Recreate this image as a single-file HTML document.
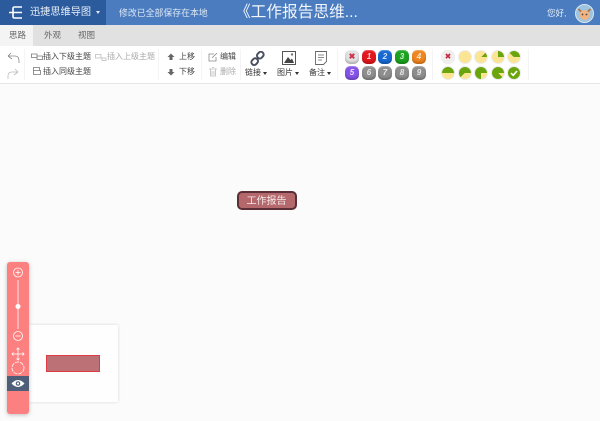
<!DOCTYPE html>
<html lang="zh"><head><meta charset="utf-8"><style>
html,body{margin:0;padding:0;width:600px;height:421px;overflow:hidden;background:#fbfbfb;font-family:"Liberation Sans","Noto Sans CJK SC",sans-serif}
#w{position:absolute;left:0;top:0;width:600px;height:421px;filter:blur(.3px)}
.a{position:absolute;white-space:nowrap}
.t{font-size:8px;line-height:10px;color:#444}
.g{color:#aaa}
.car{position:absolute;width:0;height:0;border-left:2.5px solid transparent;border-right:2.5px solid transparent;border-top:3px solid #333}
.b{position:absolute;width:14px;height:14px;border-radius:5px;color:rgba(255,255,255,.8);font:bold italic 8px/14px "Liberation Sans",sans-serif;text-align:center;box-shadow:inset 0 -2px 2px rgba(0,0,0,.22),inset 0 1px 1px rgba(255,255,255,.3)}
.p{position:absolute;width:12px;height:12px;border-radius:50%;border:1px solid #ececec}
.sep{position:absolute;top:49px;height:31px;width:1px;background:#f4f4f4}
</style></head><body><div id="w">
<div class="a" style="left:0;top:0;width:600px;height:25px;background:#4a7cbf"></div>
<div class="a" style="left:0;top:0;width:106px;height:25px;background:#2b5a9d"></div>
<svg class="a" style="left:8px;top:5px" width="16" height="15" viewBox="0 0 16 15"><path d="M14 2H6.500Q5 2 5 3.500V11.500Q5 13 6.500 13H14M1 7.500H14" fill="none" stroke="#fff" stroke-width="1.600"/></svg>
<div class="a" style="left:30px;top:6px;font-size:10.200px;line-height:13px;color:#e9f0fa">迅捷思维导图</div>
<div class="car" style="left:96px;top:11px;border-top-color:#dfe8f5"></div>
<div class="a" style="left:119px;top:8px;font-size:8.900px;line-height:10px;color:#dfe8f5">修改已全部保存在本地</div>
<div class="a" style="left:235px;top:1px;font-size:15.700px;line-height:23px;color:#f2f6fc">《工作报告思维...</div>
<div class="a" style="left:547px;top:8px;font-size:8.500px;line-height:10px;color:#e4ecf7">您好,</div>
<svg class="a" style="left:575px;top:4px" width="19" height="19" viewBox="0 0 19 19"><circle cx="9.500" cy="9.500" r="9" fill="#9cc3e0" stroke="#d8e6f3"/><path d="M3.500 5L7 8.500M15.500 5L12 8.500" stroke="#b5703a" stroke-width="1.800"/><ellipse cx="9.500" cy="11" rx="5" ry="5" fill="#eeb483"/><circle cx="7.500" cy="10.500" r=".9" fill="#543"/><circle cx="11.500" cy="10.500" r=".9" fill="#543"/></svg>

<div class="a" style="left:0;top:25px;width:600px;height:21px;background:#e1e1e1"></div>
<div class="a" style="left:0;top:25px;width:33px;height:21px;background:#f4f4f4"></div>
<div class="a t" style="left:9px;top:30px;font-size:8.500px;color:#666">思路</div>
<div class="a t" style="left:44px;top:30px;font-size:8.500px;color:#666">外观</div>
<div class="a t" style="left:78px;top:30px;font-size:8.500px;color:#666">视图</div>

<div class="a" style="left:0;top:46px;width:600px;height:37px;background:#fff;border-bottom:1px solid #e6e6e6"></div>
<svg class="a" style="left:5px;top:50px" width="16" height="30" viewBox="0 0 16 30" fill="none" stroke="#888" stroke-width=".8"><path d="M3 6H10Q14 6 14 11V13M3 6L6 3M3 6L7 9"/><path d="M13 22H7Q3 22 3 26V29M13 22L10 19M13 22L9 25" stroke="#bbb"/></svg>
<div class="sep" style="left:24px"></div>
<svg class="a" style="left:31px;top:52px" width="12" height="24" viewBox="0 0 12 24" fill="none" stroke="#777" stroke-width=".8"><path d="M.5 2H6V5.500H.5ZM6 4H11.500V7.500H6ZM2.500 15.500H8.500V18.500H2.500ZM2.500 18.500H9.500V22.500H2.500Z"/></svg>
<div class="a t" style="left:43px;top:52px">插入下级主题</div>
<svg class="a" style="left:95px;top:52px" width="12" height="10" viewBox="0 0 12 10" fill="none" stroke="#bbb" stroke-width=".8"><path d="M.5 2.500H6V6H.5ZM7 6H11V8.500H7Z"/></svg>
<div class="a t g" style="left:107px;top:52px">插入上级主题</div>
<div class="a t" style="left:43px;top:67px">插入同级主题</div>
<div class="sep" style="left:158px"></div>
<svg class="a" style="left:167px;top:53px" width="8" height="24" viewBox="0 0 8 24" fill="#666"><path d="M4 .5L7.500 4H5.500V7H2.500V4H.5ZM4 22.500L7.500 19H5.500V16H2.500V19H.5Z"/></svg>
<div class="a t" style="left:179px;top:52px">上移</div>
<div class="a t" style="left:179px;top:67px">下移</div>
<div class="sep" style="left:201px"></div>
<svg class="a" style="left:208px;top:52px" width="11" height="25" viewBox="0 0 11 25" fill="none" stroke="#888" stroke-width=".8"><path d="M6 2H1V9H8V5M4 6L9 1"/><path d="M1 17H9M2.500 17V24H7.500V17M4 15.500H6M4 19V23M6 19V23" stroke="#bbb"/></svg>
<div class="a t" style="left:220px;top:52px">编辑</div>
<div class="a t g" style="left:220px;top:67px">删除</div>
<div class="sep" style="left:240px"></div>
<svg class="a" style="left:250px;top:51px" width="15" height="15" viewBox="0 0 15 15" fill="none" stroke="#4a5160" stroke-width="2"><rect x="7.500" y=".8" width="5.500" height="7" rx="2.600" transform="rotate(42 10.500 4.300)"/><rect x="2" y="7" width="5.500" height="7" rx="2.600" transform="rotate(42 4.500 10.500)"/></svg>
<div class="a t" style="left:245px;top:68px;color:#333">链接</div><div class="car" style="left:263px;top:72px"></div>
<svg class="a" style="left:282px;top:51px" width="14" height="14" viewBox="0 0 14 14"><rect x=".5" y=".5" width="13" height="13" fill="#fff" stroke="#555"/><path d="M2 12L6 6L8.500 9L10 7.500L12 12Z" fill="#444"/><circle cx="10" cy="3.500" r="1.200" fill="#777"/></svg>
<div class="a t" style="left:277px;top:68px;color:#333">图片</div><div class="car" style="left:295px;top:72px"></div>
<svg class="a" style="left:315px;top:51px" width="12" height="14" viewBox="0 0 12 14" fill="#fff" stroke="#666" stroke-width=".9"><path d="M.5.5H11.500V10.500L8.500 13.500H.5Z"/><path d="M3 4H9M3 6.500H9M3 9H7" stroke-width=".8"/></svg>
<div class="a t" style="left:309px;top:68px;color:#333">备注</div><div class="car" style="left:327px;top:72px"></div>
<div class="sep" style="left:337px"></div>

<div class="b" style="left:345px;top:50px;background:#e2e2e2;color:#c9384a;font-style:normal">✖</div>
<div class="b" style="left:362px;top:50px;background:#e3161b">1</div>
<div class="b" style="left:378px;top:50px;background:#1669d3">2</div>
<div class="b" style="left:395px;top:50px;background:#1ba31f">3</div>
<div class="b" style="left:412px;top:50px;background:#f0861f">4</div>
<div class="b" style="left:345px;top:66px;background:#8552e8">5</div>
<div class="b" style="left:362px;top:66px;background:#8e8e8e">6</div>
<div class="b" style="left:378px;top:66px;background:#8e8e8e">7</div>
<div class="b" style="left:395px;top:66px;background:#8e8e8e">8</div>
<div class="b" style="left:412px;top:66px;background:#8e8e8e">9</div>
<div class="sep" style="left:432px"></div>

<div class="p" style="left:441px;top:50px;background:#f3eeee;color:#c9273a;font:bold 8px/12px 'DejaVu Sans',sans-serif;text-align:center">✖</div>
<div class="p" style="left:458px;top:50px;background:#fbe593"></div>
<div class="p" style="left:474px;top:50px;background:conic-gradient(#fbe593 0 45deg,#6aa50e 45deg 90deg,#fbe593 90deg)"></div>
<div class="p" style="left:491px;top:50px;background:conic-gradient(#6aa50e 0 90deg,#fbe593 90deg)"></div>
<div class="p" style="left:507px;top:50px;background:conic-gradient(#6aa50e 0 90deg,#fbe593 90deg 315deg,#6aa50e 315deg)"></div>
<div class="p" style="left:441px;top:66px;background:conic-gradient(#6aa50e 0 90deg,#fbe593 90deg 270deg,#6aa50e 270deg)"></div>
<div class="p" style="left:458px;top:66px;background:conic-gradient(#6aa50e 0 90deg,#fbe593 90deg 225deg,#6aa50e 225deg)"></div>
<div class="p" style="left:474px;top:66px;background:conic-gradient(#6aa50e 0 90deg,#fbe593 90deg 180deg,#6aa50e 180deg)"></div>
<div class="p" style="left:491px;top:66px;background:conic-gradient(#6aa50e 0 90deg,#fbe593 90deg 135deg,#6aa50e 135deg)"></div>
<svg class="a" style="left:507px;top:66px" width="14" height="14" viewBox="0 0 14 14"><circle cx="7" cy="7" r="6.500" fill="#6aa50e" stroke="#ececec"/><path d="M4 7L6.200 9.300L10 5" fill="none" stroke="#fff" stroke-width="1.600"/></svg>
<div class="sep" style="left:528px"></div>

<div class="a" style="left:237px;top:191px;width:60px;height:19px;box-sizing:border-box;background:#b5686c;border:2px solid #5c2f38;border-radius:5px;color:#f5eaea;font-size:10px;line-height:17px;text-align:center;text-indent:-1px">工作报告</div>

<div class="a" style="left:29px;top:325px;width:89px;height:77px;background:#fefefe;box-shadow:0 0 3px rgba(0,0,0,.15)"></div>
<div class="a" style="left:46px;top:355px;width:54px;height:17px;box-sizing:border-box;background:#bb7176;border:1px solid #dc3d44"></div>
<div class="a" style="left:7px;top:262px;width:22px;height:152px;background:#fc8080;border-radius:3px;box-shadow:0 1px 4px rgba(0,0,0,.25)"></div>
<div class="a" style="left:7px;top:376px;width:22px;height:15px;background:#4f5e78"></div>
<svg class="a" style="left:7px;top:262px" width="22" height="130" viewBox="0 0 22 130" fill="none" stroke="#fff" stroke-width=".8">
<circle cx="11" cy="10.500" r="4.500"/><path d="M8.500 10.500H13.500M11 8V13"/>
<path d="M11 18V67"/><circle cx="11" cy="44.500" r="2.500" fill="#fff" stroke="none"/>
<circle cx="11" cy="74" r="4.500"/><path d="M8.500 74H13.500"/>
<path d="M11 86V98M5 92H17M9.500 87.500L11 86L12.500 87.500M9.500 96.500L11 98L12.500 96.500M6.500 90.500L5 92L6.500 93.500M15.500 90.500L17 92L15.500 93.500"/>
<circle cx="11" cy="106" r="6" stroke-dasharray="4 1"/>
<path d="M4.500 121.500Q11 114.500 17.500 121.500Q11 128.500 4.500 121.500Z" fill="#fff" stroke="none"/><circle cx="11" cy="121.500" r="2.300" fill="#4f5e78" stroke="none"/><circle cx="11" cy="121.500" r="1.100" fill="#fff" stroke="none"/>
</svg>
</div></body></html>
